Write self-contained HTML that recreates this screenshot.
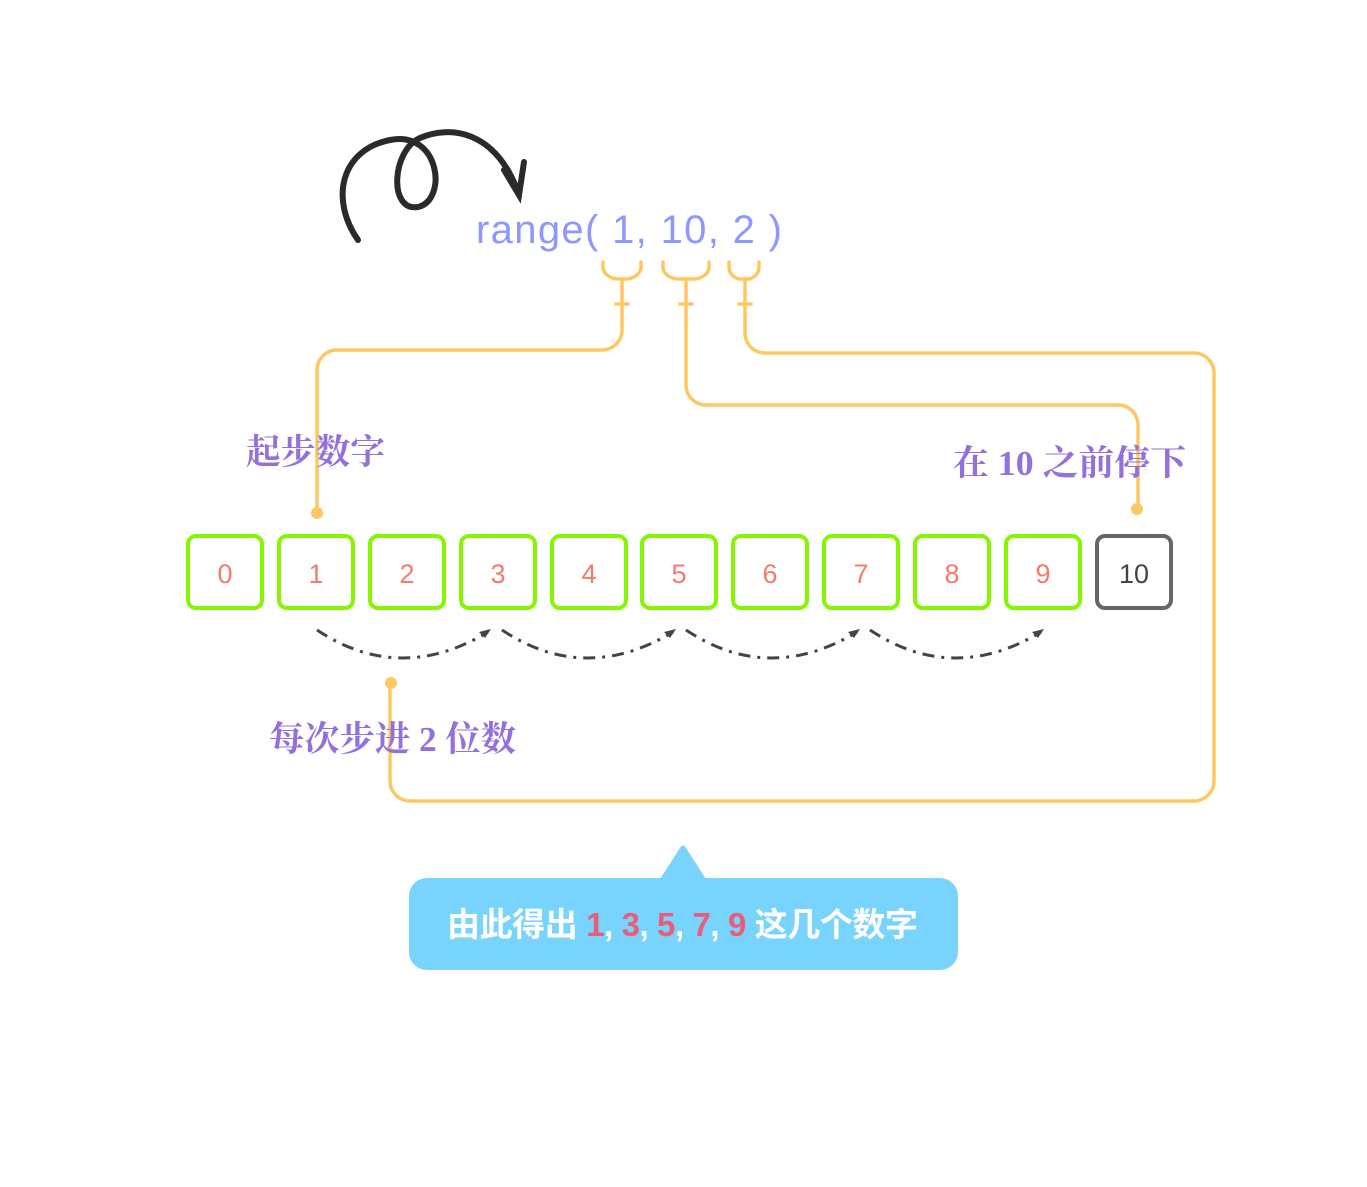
<!DOCTYPE html>
<html><head><meta charset="utf-8"><style>
html,body{margin:0;padding:0;background:#fff;}
svg{display:block}
</style></head><body>
<svg width="1367" height="1187" viewBox="0 0 1367 1187" xmlns="http://www.w3.org/2000/svg">
<!-- swirl arrow -->
<g fill="none" stroke="#2a2a2a" stroke-width="6" stroke-linecap="round">
<path d="M358 240 C330 200 340 150 390 140 C440 130 448 200 418 207 C388 212 392 150 420 138 C450 125 495 130 518 192"/>
<path d="M504 170 L519 195 L524 162"/>
</g>
<text x="476" y="243" font-family="'Liberation Sans',sans-serif" font-size="40" fill="#8e97fb" textLength="306" lengthAdjust="spacing">range(&#160;1,&#160;10,&#160;2&#160;)</text>
<!-- yellow connectors -->
<g fill="none" stroke="#fdc862" stroke-width="3.5" stroke-linecap="round">
<path d="M603 262 v5 a16 12 0 0 0 16 12 h6 a16 12 0 0 0 16 -12 v-5"/>
<path d="M663 262 v5 a16 12 0 0 0 16 12 h14 a16 12 0 0 0 16 -12 v-5"/>
<path d="M729 262 v5 a12 12 0 0 0 12 12 h6 a12 12 0 0 0 12 -12 v-5"/>
<path d="M622 279 V330 a20 20 0 0 1 -20 20 H337 a20 20 0 0 0 -20 20 V513"/>
<path d="M686 279 V385 a20 20 0 0 0 20 20 H1118 a20 20 0 0 1 20 20 V509"/>
<path d="M745 279 V333 a20 20 0 0 0 20 20 H1194 a20 20 0 0 1 20 20 V781 a20 20 0 0 1 -20 20 H410 a20 20 0 0 1 -20 -20 V683"/>
<path d="M616 304 h12 M680 304 h12 M739 304 h12"/>
</g>
<g fill="#fdc862"><circle cx="317" cy="513" r="6"/><circle cx="1137" cy="509" r="6"/><circle cx="391" cy="683" r="6"/></g>
<g font-family="'Liberation Serif','Noto Serif CJK SC',serif" font-size="35" font-weight="bold" fill="#9370db">
<text x="246" y="464" textLength="139" lengthAdjust="spacingAndGlyphs">起步数字</text>
<text x="953" y="475" textLength="233" lengthAdjust="spacingAndGlyphs">在 10 之前停下</text>
<text x="269" y="751" textLength="247" lengthAdjust="spacingAndGlyphs">每次步进 2 位数</text>
</g>
<!-- boxes -->
<g fill="none" stroke="#86f500" stroke-width="4">
<rect x="188" y="536" width="74" height="72" rx="8"/>
<rect x="279" y="536" width="74" height="72" rx="8"/>
<rect x="370" y="536" width="74" height="72" rx="8"/>
<rect x="461" y="536" width="74" height="72" rx="8"/>
<rect x="552" y="536" width="74" height="72" rx="8"/>
<rect x="642" y="536" width="74" height="72" rx="8"/>
<rect x="733" y="536" width="74" height="72" rx="8"/>
<rect x="824" y="536" width="74" height="72" rx="8"/>
<rect x="915" y="536" width="74" height="72" rx="8"/>
<rect x="1006" y="536" width="74" height="72" rx="8"/>
</g>
<rect x="1097" y="536" width="74" height="72" rx="8" fill="none" stroke="#666" stroke-width="4"/>
<g font-family="'Liberation Sans',sans-serif" font-size="27" fill="#f47a6a" text-anchor="middle">
<text x="225" y="583">0</text><text x="316" y="583">1</text><text x="407" y="583">2</text><text x="498" y="583">3</text><text x="589" y="583">4</text><text x="679" y="583">5</text><text x="770" y="583">6</text><text x="861" y="583">7</text><text x="952" y="583">8</text><text x="1043" y="583">9</text>
<text x="1134" y="583" fill="#444">10</text>
</g>
<!-- dashed arcs -->
<g fill="none" stroke="#444" stroke-width="3" stroke-dasharray="12 7 3 7">
<path d="M317 630 Q400 685 488 632"/>
<path d="M502 630 Q585 685 673 632"/>
<path d="M686 630 Q769 685 857 632"/>
<path d="M870 630 Q953 685 1041 632"/>
</g>
<g fill="#444">
<path d="M491 629 l-12 3 6 6z"/><path d="M676 629 l-12 3 6 6z"/><path d="M860 629 l-12 3 6 6z"/><path d="M1044 629 l-12 3 6 6z"/>
</g>
<!-- tooltip -->
<path d="M660 879 L680 848 Q683 843 686 848 L706 879 Z" fill="#79d4fd"/>
<rect x="409" y="878" width="549" height="92" rx="18" fill="#79d4fd"/>
<text x="447" y="936" font-family="'Liberation Sans','Noto Sans CJK SC',sans-serif" font-size="33" font-weight="bold" fill="#fff" textLength="471" lengthAdjust="spacing">由此得出 <tspan fill="#e85d7a">1</tspan>, <tspan fill="#e85d7a">3</tspan>, <tspan fill="#e85d7a">5</tspan>, <tspan fill="#e85d7a">7</tspan>, <tspan fill="#e85d7a">9</tspan> 这几个数字</text>
</svg>
</body></html>
